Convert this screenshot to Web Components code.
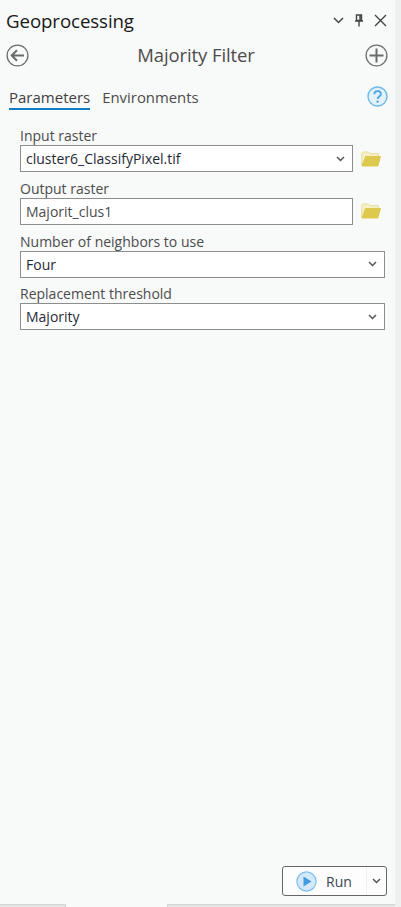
<!DOCTYPE html>
<html>
<head>
<meta charset="utf-8">
<style>
  html, body { margin: 0; padding: 0; height: 100%; overflow: hidden; }
  body { font-family: "Open Sans", "Noto Sans", sans-serif; background: #f0f1f1; }
</style>
</head>
<body>
<gp-pane>
  <gp-titlebar slot="top" text="Geoprocessing"></gp-titlebar>
  <gp-toolnav slot="top" text="Majority Filter"></gp-toolnav>
  <gp-tabs slot="top"></gp-tabs>
  <gp-field label="Input raster" value="cluster6_ClassifyPixel.tif" dropdown browse dark></gp-field>
  <gp-field label="Output raster" value="Majorit_clus1" browse></gp-field>
  <gp-field label="Number of neighbors to use" value="Four" dropdown dark></gp-field>
  <gp-field label="Replacement threshold" value="Majority" dropdown dark></gp-field>
  <gp-run slot="bottom"></gp-run>
</gp-pane>

<script>
const CHEVRON = `<svg width="9" height="6" viewBox="0 0 9 6"><path d="M1 1l3.5 3.5L8 1" fill="none" stroke="#555" stroke-width="1.5"/></svg>`;

class GpPane extends HTMLElement {
  constructor() {
    super();
    this.attachShadow({ mode: "open" });
    this.shadowRoot.innerHTML = `
      <style>
        :host { display: flex; width: 401px; height: 907px; background: #eff0f0; }
        .main { width: 395px; display: flex; flex-direction: column; background: #f8f9f9; position: relative; }
        .form { display: flex; flex-direction: column; padding: 10px 10px 0 20px; }
        .foot { margin-top: auto; display: flex; justify-content: flex-end; padding: 0 8px 8px 0; }
        .tabs { display: flex; height: 3px; }
        .tabs i { display: block; background: #e2e3e3; border-top: 1px solid #d4d5d5; }
        .tabs i:first-child { width: 65px; border-right: 1px solid #d4d5d5; }
        .tabs i:last-child { margin-left: 101px; flex: 1; border-left: 1px solid #d4d5d5; }
      </style>
      <div class="main">
        <slot name="top"></slot>
        <div class="form"><slot></slot></div>
        <div class="foot"><slot name="bottom"></slot></div>
        <div class="tabs"><i></i><i></i></div>
      </div>`;
  }
}

class GpTitlebar extends HTMLElement {
  constructor() {
    super();
    this.attachShadow({ mode: "open" });
    this.shadowRoot.innerHTML = `
      <style>
        :host { display: flex; align-items: center; height: 39px; padding: 1px 8px 0 6px; box-sizing: border-box; }
        .t { flex: 1; font-size: 18.7px; color: #1a1a1a; letter-spacing: -0.1px; }
        .btns { display: flex; align-items: center; gap: 10px; }
        svg { display: block; }
      </style>
      <div class="t"></div>
      <div class="btns">
        <svg width="11" height="7" viewBox="0 0 11 7"><path d="M1 1l4.5 4.5L10 1" fill="none" stroke="#444" stroke-width="1.5"/></svg>
        <svg width="10" height="13" viewBox="0 0 10 13"><path d="M2.5 1h5v5.5h-5zM1 7h8M5 7v5.5M6 1.5v5" fill="none" stroke="#444" stroke-width="1.4"/></svg>
        <svg width="13" height="13" viewBox="0 0 13 13"><path d="M1 1l11 11M12 1L1 12" fill="none" stroke="#444" stroke-width="1.4"/></svg>
      </div>`;
    this.shadowRoot.querySelector(".t").textContent = this.getAttribute("text");
  }
}

class GpToolnav extends HTMLElement {
  constructor() {
    super();
    this.attachShadow({ mode: "open" });
    this.shadowRoot.innerHTML = `
      <style>
        :host { display: flex; align-items: center; height: 32px; padding: 0 7px 0 6px; }
        .t { flex: 1; text-align: center; font-size: 18.5px; color: #4c4c4c; padding: 0 2px 2px 0; letter-spacing: -0.1px; }
        svg { display: block; }
      </style>
      <svg width="23" height="23" viewBox="0 0 23 23"><circle cx="11.5" cy="11.5" r="10.4" fill="none" stroke="#6f6f6f" stroke-width="1.3"/><path d="M18 11.5H6M11 6.2l-5.3 5.3 5.3 5.3" fill="none" stroke="#6a6a6a" stroke-width="2"/></svg>
      <div class="t"></div>
      <svg width="23" height="23" viewBox="0 0 23 23"><circle cx="11.5" cy="11.5" r="10.4" fill="none" stroke="#6f6f6f" stroke-width="1.3"/><path d="M11.5 4.5v14M4.5 11.5h14" fill="none" stroke="#6a6a6a" stroke-width="2"/></svg>`;
    this.shadowRoot.querySelector(".t").textContent = this.getAttribute("text");
  }
}

class GpTabs extends HTMLElement {
  constructor() {
    super();
    this.attachShadow({ mode: "open" });
    this.shadowRoot.innerHTML = `
      <style>
        :host { display: flex; align-items: flex-start; height: 39px; padding: 11px 7px 0 9px; box-sizing: border-box; }
        .tab { font-size: 14.9px; line-height: 30px; height: 28px; box-sizing: border-box; color: #4c4c4c; }
        .on { font-size: 15px; border-bottom: 2px solid #0f7cc4; color: #3f3f3f; margin-right: 12px; }
        .sp { flex: 1; }
        svg { display: block; margin-top: 4px; }
      </style>
      <div class="tab on">Parameters</div>
      <div class="tab">Environments</div>
      <div class="sp"></div>
      <svg width="21" height="21" viewBox="0 0 21 21"><circle cx="10.5" cy="10.5" r="9.5" fill="#e3f1fb" stroke="#6cb9ec" stroke-width="1.4"/><path d="M7.3 8.2c0-4.2 6.6-4.2 6.6-.2 0 2.5-3.3 2.6-3.3 5" fill="none" stroke="#4ba6e4" stroke-width="1.8"/><circle cx="10.6" cy="15.6" r="1.2" fill="#4ba6e4"/></svg>`;
  }
}

class GpField extends HTMLElement {
  constructor() {
    super();
    this.attachShadow({ mode: "open" });
    const browse = this.hasAttribute("browse");
    this.shadowRoot.innerHTML = `
      <style>
        :host { display: block; margin-bottom: 0.8px; }
        .l { font-size: 14px; line-height: 31px; height: 25px; color: #4c4c4c; }
        .row { display: flex; align-items: center; gap: 8px; }
        .box { flex: 1; height: 27px; box-sizing: border-box; border: 1.5px solid #8e8e8e; background: #fff;
               display: flex; align-items: center; justify-content: space-between; padding: 0 7px 0 5px; font-size: 14px; color: ${this.hasAttribute("dark") ? "#1f2a33" : "#4c4c4c"}; }
        svg { display: block; }
        .folder { margin-right: 4px; }
      </style>
      <div class="l"></div>
      <div class="row">
        <div class="box"><span class="v"></span>${this.hasAttribute("dropdown") ? CHEVRON : ""}</div>
        ${browse ? `<svg class="folder" width="20" height="16" viewBox="0 0 20 16"><path d="M.7 14.5V2.6L2 1h5.5L9 2.6h8.4v2.5" fill="#f6efc8" stroke="#e8dc9c"/><path d="M1 15L4.5 5.5h15L16.8 15z" fill="#dcc94e" stroke="#dcc94e"/></svg>` : ""}
      </div>`;
    this.shadowRoot.querySelector(".l").textContent = this.getAttribute("label");
    this.shadowRoot.querySelector(".v").textContent = this.getAttribute("value");
  }
}

class GpRun extends HTMLElement {
  constructor() {
    super();
    this.attachShadow({ mode: "open" });
    this.shadowRoot.innerHTML = `
      <style>
        :host { display: flex; width: 105px; height: 30px; box-sizing: border-box; border: 1px solid #666; border-radius: 3px; background: #fdfdfd; }
        .a { flex: 1; display: flex; align-items: center; padding-left: 13px; gap: 9px; border-right: 1px solid #f0f0f0; font-size: 14px; color: #3c4650; }
        .b { width: 19px; display: flex; align-items: center; justify-content: center; }
        svg { display: block; }
      </style>
      <div class="a">
        <svg width="21" height="21" viewBox="0 0 21 21"><circle cx="10.5" cy="10.5" r="9.6" fill="#d3e8f8" stroke="#7cc0ee" stroke-width="1.2"/><path d="M7.5 5.5l8 5-8 5z" fill="#3f9ade"/></svg>
        <span>Run</span>
      </div>
      <div class="b">${CHEVRON}</div>`;
  }
}

customElements.define("gp-pane", GpPane);
customElements.define("gp-titlebar", GpTitlebar);
customElements.define("gp-toolnav", GpToolnav);
customElements.define("gp-tabs", GpTabs);
customElements.define("gp-field", GpField);
customElements.define("gp-run", GpRun);
</script>
</body>
</html>
